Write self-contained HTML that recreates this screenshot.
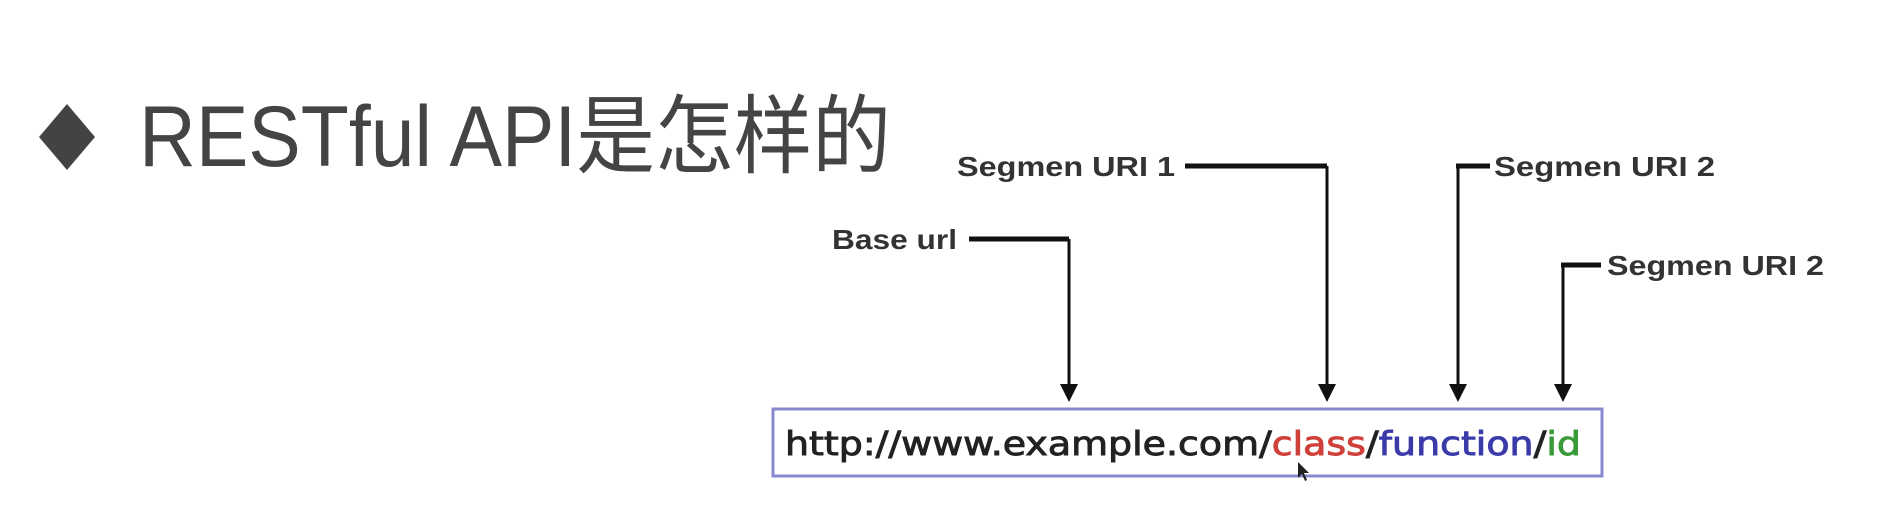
<!DOCTYPE html>
<html><head><meta charset="utf-8"><style>
html,body{margin:0;padding:0;background:#fff;width:1900px;height:508px;overflow:hidden}
</style></head><body>
<svg width="1900" height="508" viewBox="0 0 1900 508" xmlns="http://www.w3.org/2000/svg">
<rect width="1900" height="508" fill="#fff"/>
<polygon points="67,104 95,137 67,170 39,137" fill="#434343"/>
<text x="139" y="166" font-family="'Liberation Sans','Noto Sans CJK SC',sans-serif" font-size="86" fill="#444" textLength="752" lengthAdjust="spacingAndGlyphs">RESTful API是怎样的</text>
<g font-family="'Liberation Sans',sans-serif" font-weight="bold" font-size="28" fill="#333">
<text x="957" y="176" textLength="218" lengthAdjust="spacingAndGlyphs">Segmen URI 1</text>
<text x="1494" y="176" textLength="221" lengthAdjust="spacingAndGlyphs">Segmen URI 2</text>
<text x="832" y="249" textLength="125" lengthAdjust="spacingAndGlyphs">Base url</text>
<text x="1607" y="275" textLength="217" lengthAdjust="spacingAndGlyphs">Segmen URI 2</text>
</g>
<g fill="none" stroke="#111">
<path d="M1185 166H1327" stroke-width="5"/><path d="M1327 166V398" stroke-width="3"/>
<path d="M1456 166H1490" stroke-width="5"/><path d="M1458 166V398" stroke-width="3"/>
<path d="M969 239H1069" stroke-width="5"/><path d="M1069 239V398" stroke-width="3"/>
<path d="M1561 265H1601" stroke-width="5"/><path d="M1563 265V398" stroke-width="3"/>
</g>
<g fill="#111">
<polygon points="1060,384 1078,384 1069,402"/>
<polygon points="1318,384 1336,384 1327,402"/>
<polygon points="1449,384 1467,384 1458,402"/>
<polygon points="1554,384 1572,384 1563,402"/>
</g>
<rect x="773" y="409" width="829" height="67" fill="#fff" stroke="#8888d0" stroke-width="3"/>
<text x="785" y="455" font-family="'DejaVu Sans','Liberation Sans',sans-serif" font-size="33" fill="#222" stroke="#222" stroke-width="0.9" textLength="796" lengthAdjust="spacingAndGlyphs">http://www.example.com/<tspan fill="#d0403a" stroke="#d0403a">class</tspan>/<tspan fill="#3a3aa8" stroke="#3a3aa8">function</tspan>/<tspan fill="#3a9a3a" stroke="#3a9a3a">id</tspan></text>
<path d="M1298 462l0 16 4-4 3 7 2-1-3-7 5 0z" fill="#222"/>
</svg>
</body></html>
